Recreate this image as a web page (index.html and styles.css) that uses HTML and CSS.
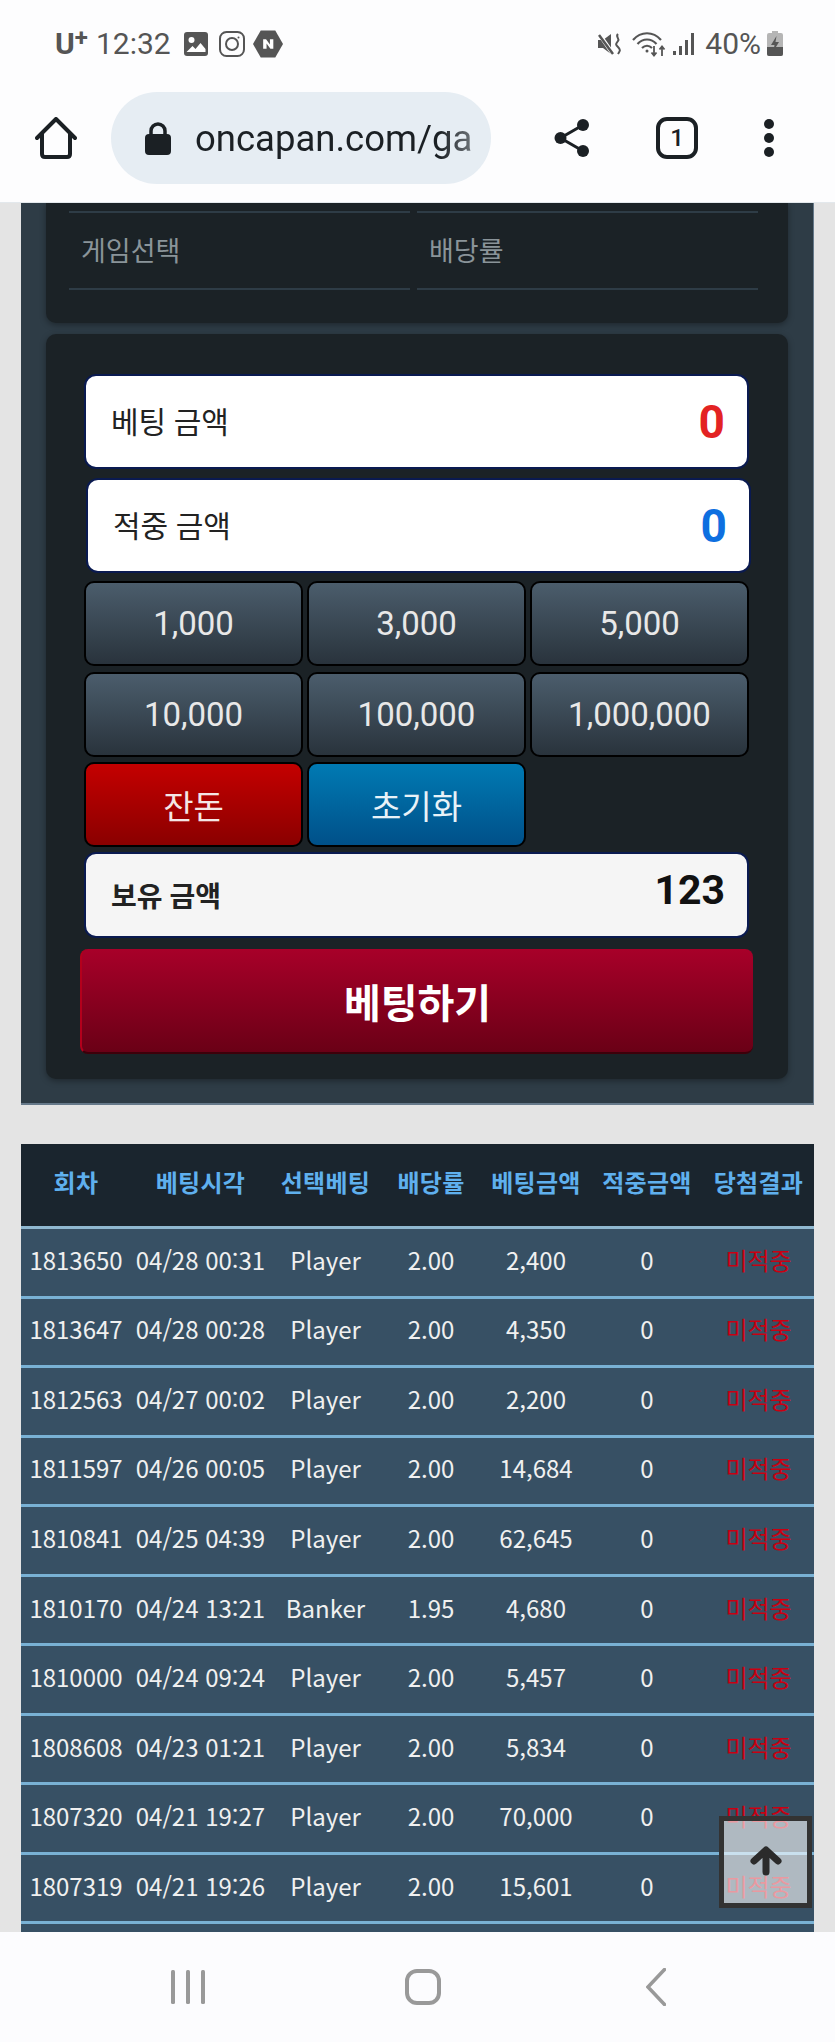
FILE: index.html
```html
<!DOCTYPE html>
<html lang="ko">

<head>
    <meta charset="UTF-8">
    <meta name="viewport" content="width=device-width, initial-scale=1.0">
    <title>oncapan</title>
    <link rel="stylesheet" href="styles.css">
</head>

<body>
    <div class="phone">
        <header class="top">
            <div class="status">
                <span class="carrier">U<span class="carrier-plus">+</span></span>
                <span class="clock">12:32</span>
                <svg class="st-img" width="24" height="24" viewBox="0 0 24 24">
                    <rect width="24" height="24" rx="3" fill="#555"/>
                    <circle cx="7.5" cy="8" r="3" fill="#fff"/>
                    <path d="M2.5 20l6-6 3 3 5-6 5 6v3z" fill="#fff"/>
                </svg>
                <svg class="st-insta" width="26" height="26" viewBox="0 0 26 26" fill="none" stroke="#555" stroke-width="2">
                    <rect x="1" y="1" width="24" height="24" rx="6.5"/>
                    <circle cx="13" cy="13" r="6"/>
                    <circle cx="19.5" cy="6.5" r="1" fill="#555" stroke="none"/>
                </svg>
                <svg class="st-naver" width="30" height="28" viewBox="0 0 31 28">
                    <path d="M8 0h15l8 14-8 14H8L0 14z" fill="#555"/>
                    <path d="M10.500 9h3l4 5.500V9h3.500v10h-3l-4-5.500V19h-3.500z" fill="#fff"/>
                </svg>
                <div class="status-right">
                    <svg class="st-mute" width="23" height="24" viewBox="0 0 23 24">
                        <path d="M0 8h5l8-6v20l-8-6H0z" fill="#555"/>
                        <path d="M1 2l14 20" stroke="#fff" stroke-width="4"/>
                        <path d="M1 3l14 19" stroke="#555" stroke-width="2.500"/>
                        <path d="M20 2c-3 3 2 4 0 7s-3 3 0 6 2 4 0 7" fill="none" stroke="#555" stroke-width="2"/>
                    </svg>
                    <svg class="st-wifi" width="34" height="26" viewBox="0 0 34 26" fill="none" stroke="#555" stroke-width="2.200">
                        <path d="M1 9c8-9 20-9 28 0"/>
                        <path d="M5.500 13c5.500-6 13.500-6 19 0"/>
                        <path d="M10 17c3-3 7-3 10 0"/>
                        <circle cx="15" cy="20" r="1.500" fill="#555" stroke="none"/>
                        <path d="M22 15v9M19.500 21.500l2.500 3 2.500-3M30 25v-9M27.500 18.500l2.500-3 2.500 3" stroke-width="1.800"/>
                    </svg>
                    <svg class="st-signal" width="22" height="24" viewBox="0 0 22 24" fill="#555">
                        <rect x="0" y="19" width="3" height="4"/>
                        <rect x="6" y="14" width="3" height="9"/>
                        <rect x="12" y="8" width="3" height="15"/>
                        <rect x="18" y="1" width="3" height="22"/>
                    </svg>
                    <span class="battery-text">40%</span>
                    <svg class="st-batt" width="16" height="25" viewBox="0 0 16 25">
                        <path d="M5 0h6v2h3q2 0 2 2v19q0 2-2 2H2q-2 0-2-2V4q0-2 2-2h3z" fill="#b5b5b5"/>
                        <path d="M0 16h16v7q0 2-2 2H2q-2 0-2-2z" fill="#555"/>
                        <path d="M9.500 5L4 14h3.500l-1 6L12 11H8.500z" fill="#555"/>
                    </svg>
                </div>
            </div>
            <div class="toolbar">
                <svg class="tb-home" width="42" height="42" viewBox="0 0 42 42" fill="none" stroke="#1b2024" stroke-width="4" stroke-linejoin="round" stroke-linecap="round">
                    <path d="M2 21L21 2l19 19M7 17v20q0 3 3 3h22q3 0 3-3V17"/>
                </svg>
                <div class="urlbar">
                    <svg class="lock" width="26" height="33" viewBox="0 0 26 33">
                        <path d="M6 14V9a7 7 0 0 1 14 0v5" fill="none" stroke="#1b2024" stroke-width="3.500"/>
                        <rect y="12" width="26" height="21" rx="4" fill="#1b2024"/>
                    </svg>
                    <span class="url">oncapan.com/ga</span>
                </div>
                <svg class="tb-share" width="36" height="40" viewBox="0 0 36 40" fill="#1b2024">
                    <circle cx="29" cy="7" r="6"/>
                    <circle cx="6.500" cy="20" r="6"/>
                    <circle cx="29" cy="33" r="6"/>
                    <path d="M29 7L6.500 20 29 33" fill="none" stroke="#1b2024" stroke-width="3"/>
                </svg>
                <div class="tabs">1</div>
                <div class="dots">
                    <span class="dot"></span>
                    <span class="dot"></span>
                    <span class="dot"></span>
                </div>
            </div>
        </header>

        <main class="view">
            <section class="panel">
                <div class="box pick-box">
                    <div class="pick-cell">게임선택</div>
                    <div class="pick-cell">배당률</div>
                </div>
                <div class="box bet-box">
                    <div class="field">
                        <span class="field-label">베팅 금액</span>
                        <span class="field-num red">0</span>
                    </div>
                    <div class="field field-shift">
                        <span class="field-label">적중 금액</span>
                        <span class="field-num blue">0</span>
                    </div>
                    <div class="chips">
                        <button class="chip">1,000</button>
                        <button class="chip">3,000</button>
                        <button class="chip">5,000</button>
                        <button class="chip">10,000</button>
                        <button class="chip">100,000</button>
                        <button class="chip">1,000,000</button>
                        <button class="chip chip-red">잔돈</button>
                        <button class="chip chip-blue">초기화</button>
                    </div>
                    <div class="field field-own">
                        <span class="own-label">보유 금액</span>
                        <span class="own-num">123</span>
                    </div>
                    <button class="bet-btn">베팅하기</button>
                </div>
            </section>

            <table class="history">
                <colgroup>
                    <col class="c1"><col class="c2"><col class="c3"><col class="c4"><col class="c5"><col class="c6"><col class="c7">
                </colgroup>
                <thead>
                    <tr>
                        <th>회차</th><th>베팅시각</th><th>선택베팅</th><th>배당률</th><th>베팅금액</th><th>적중금액</th><th>당첨결과</th>
                    </tr>
                </thead>
                <tbody>
                    <tr><td>1813650</td><td>04/28 00:31</td><td>Player</td><td>2.00</td><td>2,400</td><td>0</td><td class="miss">미적중</td></tr>
                    <tr><td>1813647</td><td>04/28 00:28</td><td>Player</td><td>2.00</td><td>4,350</td><td>0</td><td class="miss">미적중</td></tr>
                    <tr><td>1812563</td><td>04/27 00:02</td><td>Player</td><td>2.00</td><td>2,200</td><td>0</td><td class="miss">미적중</td></tr>
                    <tr><td>1811597</td><td>04/26 00:05</td><td>Player</td><td>2.00</td><td>14,684</td><td>0</td><td class="miss">미적중</td></tr>
                    <tr><td>1810841</td><td>04/25 04:39</td><td>Player</td><td>2.00</td><td>62,645</td><td>0</td><td class="miss">미적중</td></tr>
                    <tr><td>1810170</td><td>04/24 13:21</td><td>Banker</td><td>1.95</td><td>4,680</td><td>0</td><td class="miss">미적중</td></tr>
                    <tr><td>1810000</td><td>04/24 09:24</td><td>Player</td><td>2.00</td><td>5,457</td><td>0</td><td class="miss">미적중</td></tr>
                    <tr><td>1808608</td><td>04/23 01:21</td><td>Player</td><td>2.00</td><td>5,834</td><td>0</td><td class="miss">미적중</td></tr>
                    <tr><td>1807320</td><td>04/21 19:27</td><td>Player</td><td>2.00</td><td>70,000</td><td>0</td><td class="miss">미적중</td></tr>
                    <tr><td>1807319</td><td>04/21 19:26</td><td>Player</td><td>2.00</td><td>15,601</td><td>0</td><td class="miss">미적중</td></tr>
                    <tr><td colspan="7"></td></tr>
                </tbody>
            </table>

            <button class="to-top">
                <svg width="32" height="30" viewBox="0 0 32 30" fill="none" stroke="#2b2b2b" stroke-width="7" stroke-linecap="round" stroke-linejoin="round">
                    <path d="M16 26V6M4 15L16 4l12 11"/>
                </svg>
            </button>
        </main>

        <nav class="softkeys">
            <svg class="key-recent" width="36" height="36" viewBox="0 0 36 36" fill="#999">
                <rect x="2" y="1" width="4" height="34" rx="1.500"/>
                <rect x="17" y="1" width="4" height="34" rx="1.500"/>
                <rect x="32" y="1" width="4" height="34" rx="1.500"/>
            </svg>
            <svg class="key-home" width="36" height="36" viewBox="0 0 36 36" fill="none" stroke="#999" stroke-width="4">
                <rect x="2" y="2" width="32" height="32" rx="10"/>
            </svg>
            <svg class="key-back" width="20" height="38" viewBox="0 0 20 38" fill="none" stroke="#999" stroke-width="3.500" stroke-linecap="round">
                <path d="M18.500 1.500L2 19l16.500 17.500"/>
            </svg>
        </nav>
    </div>
</body>

</html>
```

FILE: styles.css
```css
* {
    box-sizing: border-box;
}

body {
    margin: 0;
    font-family: "Roboto", "Noto Sans CJK KR", sans-serif;
}

.phone {
    display: flex;
    flex-direction: column;
    width: 835px;
    height: 2042px;
    overflow: hidden;
}

/* browser chrome */
.top {
    flex: none;
    height: 203px;
    background: #fdfdfe;
    border-bottom: 1px solid #e3e8ec;
}

.status {
    display: flex;
    align-items: center;
    height: 87px;
    padding: 0 52px 0 55px;
    color: #555;
}

.carrier {
    font-size: 30px;
    font-weight: 700;
    width: 41px;
}

.carrier-plus {
    font-size: 24px;
    vertical-align: 8px;
    line-height: 0;
}

.clock {
    font-size: 30px;
}

.st-img {
    margin-left: 13px;
}

.st-insta {
    margin-left: 11px;
}

.st-naver {
    margin-left: 8px;
}

.status-right {
    display: flex;
    align-items: center;
    margin-left: auto;
}

.st-wifi {
    margin-left: 11px;
}

.st-signal {
    margin-left: 7px;
}

.battery-text {
    margin-left: 10px;
    font-size: 30px;
}

.st-batt {
    margin-left: 6px;
}

.toolbar {
    display: flex;
    align-items: center;
    height: 92px;
    margin-top: 5px;
    padding-left: 35px;
}

.urlbar {
    display: flex;
    align-items: center;
    width: 380px;
    height: 92px;
    margin-left: 34px;
    padding-left: 34px;
    border-radius: 46px;
    background: #e6edf3;
}

.url {
    display: block;
    margin-left: 24px;
    white-space: nowrap;
    font-size: 36.500px;
    color: #1b2024;
    -webkit-mask-image: linear-gradient(to right, #000 88%, rgba(0, 0, 0, 0.6));
    mask-image: linear-gradient(to right, #000 88%, rgba(0, 0, 0, 0.6));
}

.tb-share {
    margin-left: 63px;
}

.tabs {
    display: flex;
    align-items: center;
    justify-content: center;
    width: 42px;
    height: 42px;
    margin-left: 66px;
    border: 4px solid #1b2024;
    border-radius: 11px;
    font-size: 24px;
    font-weight: 500;
    color: #1b2024;
}

.dots {
    display: flex;
    flex-direction: column;
    gap: 4px;
    margin-left: 66px;
}

.dot {
    display: block;
    width: 10px;
    height: 10px;
    border-radius: 50%;
    background: #1b2024;
}

/* page */
.view {
    position: relative;
    flex: 1;
    overflow: hidden;
    background: #e4e4e4;
}

.panel {
    margin: 0 21px;
    padding: 0 25px 24px;
    background: #2e3c46;
    border-right: 1px solid #66798a;
    border-bottom: 2px solid #66798a;
}

.box {
    background: #1b2226;
    border-radius: 0 0 10px 10px;
    box-shadow: 0 2px 6px rgba(0, 0, 0, 0.35);
}

.pick-box {
    display: grid;
    grid-template-columns: 341px 341px;
    column-gap: 7px;
    height: 120px;
    padding: 8px 0 0 23px;
}

.pick-cell {
    height: 79px;
    padding: 17px 0 0 12px;
    border-top: 2px solid #2e3c46;
    border-bottom: 2px solid #2e3c46;
    font-size: 27px;
    color: #8a9499;
}

.bet-box {
    margin-top: 11px;
    padding: 40px 39px 25px 38px;
    border-radius: 10px;
}

.field {
    display: flex;
    align-items: center;
    justify-content: space-between;
    height: 95px;
    padding: 0 22px 0 25px;
    margin-bottom: 9px;
    background: #fff;
    border: 2px solid #0a1a50;
    border-radius: 12px;
}

.field-shift {
    margin: 0 -2px 8px 2px;
}

.field-label {
    font-size: 30px;
    color: #222;
    margin-bottom: 4px;
}

.field-num {
    font-size: 46px;
    font-weight: 700;
}

.red {
    color: #e32323;
}

.blue {
    color: #0e6fe0;
}

.chips {
    display: grid;
    grid-template-columns: repeat(3, 1fr);
    grid-auto-rows: 85px;
    gap: 5.500px 4px;
}

.chip {
    padding: 0;
    border: 2px solid #000;
    border-radius: 10px;
    background: linear-gradient(#4b5d6c, #29333c);
    font-family: inherit;
    font-size: 33px;
    color: #e8e8e8;
}

.chip-red {
    background: linear-gradient(#c40000, #8a0000);
    color: #f4e6e6;
}

.chip-blue {
    background: linear-gradient(#007ab3, #005089);
    color: #e8f2f8;
}

.field-own {
    height: 86px;
    margin: 5px 0 11px;
    background: #f5f5f5;
}

.own-label {
    font-size: 28px;
    font-weight: 700;
    color: #222;
}

.own-num {
    font-size: 41px;
    font-weight: 700;
    color: #111;
    margin-bottom: 10px;
}

.bet-btn {
    display: block;
    width: 673px;
    height: 105px;
    margin: 0 -4px;
    padding: 0;
    border: 0;
    border-left: 2px solid #b3001c;
    border-bottom: 2px solid #3d000a;
    border-radius: 8px;
    background: linear-gradient(#a80029, #6a0016);
    font-family: inherit;
    font-size: 40px;
    font-weight: 700;
    color: #fff;
}

/* betting history */
.history {
    width: 793px;
    margin: 39px 21px 0;
    border-collapse: separate;
    border-spacing: 0;
    table-layout: fixed;
    font-family: "Noto Sans CJK KR", sans-serif;
}

.c1 {
    width: 110px;
}

.c2 {
    width: 139px;
}

.c3 {
    width: 111px;
}

.c4 {
    width: 100px;
}

.c5 {
    width: 110px;
}

.c6 {
    width: 112px;
}

.c7 {
    width: 111px;
}

.history th {
    height: 85px;
    padding: 0 0 8px;
    background: #1a252e;
    border-bottom: 3px solid #8fb8d0;
    font-size: 24px;
    font-weight: 700;
    letter-spacing: 0.3px;
    color: #5fb0ee;
    white-space: nowrap;
}

.history td {
    height: 69.560px;
    padding: 0 0 5px;
    background: #375064;
    border-bottom: 3px solid #79b1d4;
    font-size: 24px;
    line-height: 1;
    color: #f0f0f0;
    text-align: center;
    white-space: nowrap;
}

.history td.miss {
    color: #c80012;
}

.to-top {
    position: absolute;
    left: 719px;
    top: 1613px;
    display: flex;
    align-items: center;
    justify-content: center;
    width: 93px;
    height: 92px;
    padding: 0 0 3px;
    background: rgba(255, 255, 255, 0.6);
    border: 5px solid #333;
    border-radius: 0;
}

/* android nav keys */
.softkeys {
    flex: none;
    display: flex;
    align-items: center;
    height: 110px;
    padding: 0 0 0 169px;
    background: #fcfcfe;
}

.key-home {
    margin-left: 200px;
}

.key-back {
    margin-left: 205px;
}
```
